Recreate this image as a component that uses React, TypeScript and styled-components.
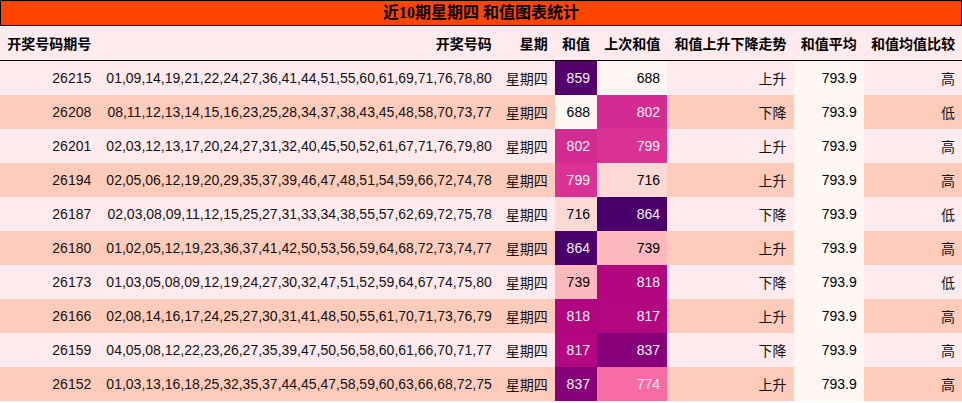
import React from "react";
import styled, { createGlobalStyle } from "styled-components";

const GlobalStyle = createGlobalStyle`
  html, body { margin: 0; padding: 0; background: #ffffff; }
  body { font-family: "Liberation Sans", "Noto Sans CJK SC", sans-serif; }
`;

const RDPU: [number, number, number][] = [
  [255, 247, 243],
  [253, 224, 221],
  [252, 197, 192],
  [250, 159, 181],
  [247, 104, 161],
  [221, 52, 151],
  [174, 1, 126],
  [122, 1, 119],
  [73, 0, 106],
];

function rdpu(t: number): [number, number, number] {
  const c = Math.max(0, Math.min(1, t));
  const pos = c * (RDPU.length - 1);
  const i = Math.min(RDPU.length - 2, Math.floor(pos));
  const f = pos - i;
  const a = RDPU[i];
  const b = RDPU[i + 1];
  return [0, 1, 2].map((k) => Math.round(a[k] + (b[k] - a[k]) * f)) as [number, number, number];
}

function lum(rgb: [number, number, number]): number {
  const lin = rgb.map((v) => {
    const c = v / 255;
    return c <= 0.03928 ? c / 12.92 : Math.pow((c + 0.055) / 1.055, 2.4);
  });
  return 0.2126 * lin[0] + 0.7152 * lin[1] + 0.0722 * lin[2];
}

function heat(v: number, min: number, max: number) {
  const t = max === min ? 0 : (v - min) / (max - min);
  const rgb = rdpu(t);
  return {
    bg: `rgb(${rgb[0]}, ${rgb[1]}, ${rgb[2]})`,
    fg: lum(rgb) < 0.408 ? "#f1f1f1" : "#000000",
  };
}

type Row = [number, string, number, number, string, string];

const rows: Row[] = [
  [26215, "01,09,14,19,21,22,24,27,36,41,44,51,55,60,61,69,71,76,78,80", 859, 688, "上升", "高"],
  [26208, "08,11,12,13,14,15,16,23,25,28,34,37,38,43,45,48,58,70,73,77", 688, 802, "下降", "低"],
  [26201, "02,03,12,13,17,20,24,27,31,32,40,45,50,52,61,67,71,76,79,80", 802, 799, "上升", "高"],
  [26194, "02,05,06,12,19,20,29,35,37,39,46,47,48,51,54,59,66,72,74,78", 799, 716, "上升", "高"],
  [26187, "02,03,08,09,11,12,15,25,27,31,33,34,38,55,57,62,69,72,75,78", 716, 864, "下降", "低"],
  [26180, "01,02,05,12,19,23,36,37,41,42,50,53,56,59,64,68,72,73,74,77", 864, 739, "上升", "高"],
  [26173, "01,03,05,08,09,12,19,24,27,30,32,47,51,52,59,64,67,74,75,80", 739, 818, "下降", "低"],
  [26166, "02,08,14,16,17,24,25,27,30,31,41,48,50,55,61,70,71,73,76,79", 818, 817, "上升", "高"],
  [26159, "04,05,08,12,22,23,26,27,35,39,47,50,56,58,60,61,66,70,71,77", 817, 837, "下降", "高"],
  [26152, "01,03,13,16,18,25,32,35,37,44,45,47,58,59,60,63,66,68,72,75", 837, 774, "上升", "高"],
];

const headers = ["开奖号码期号", "开奖号码", "星期", "和值", "上次和值", "和值上升下降走势", "和值平均", "和值均值比较"];

const Table = styled.table`
  width: 100%;
  border-collapse: collapse;
  border-spacing: 0;
  font-size: 14px;
  color: #111111;
`;

const Caption = styled.caption`
  caption-side: top;
  background: #ff4500;
  border: 1px solid #000000;
  height: 24px;
  line-height: 24px;
  font-family: "Liberation Serif", "Noto Sans CJK SC", serif;
  font-weight: bold;
  font-size: 16px;
  color: #000000;
  text-align: center;
`;

const HeadRow = styled.tr`
  background: #ffebee;
  border-bottom: 1px solid #000000;
`;

const HeadCell = styled.th`
  height: 34px;
  padding: 0 7px;
  text-align: right;
  font-weight: bold;
  white-space: nowrap;
  color: #000000;
`;

const BodyRow = styled.tr`
  background: #ffebee;
  &:nth-child(even) {
    background: #ffccbc;
  }
`;

const Cell = styled.td<{ $bg?: string; $fg?: string }>`
  height: 34px;
  padding: 0 7px;
  text-align: right;
  white-space: nowrap;
  background: ${(p) => p.$bg ?? "transparent"};
  color: ${(p) => p.$fg ?? "inherit"};
`;

export default function App() {
  const avg = heat(793.9, 793.9, 793.9);
  return (
    <>
      <GlobalStyle />
      <Table>
        <Caption>近10期星期四 和值图表统计</Caption>
        <thead>
          <HeadRow>
            {headers.map((h) => (
              <HeadCell key={h}>{h}</HeadCell>
            ))}
          </HeadRow>
        </thead>
        <tbody>
          {rows.map((r) => {
            const s = heat(r[2], 688, 864);
            const p = heat(r[3], 688, 864);
            return (
              <BodyRow key={r[0]}>
                <Cell>{r[0]}</Cell>
                <Cell>{r[1]}</Cell>
                <Cell>星期四</Cell>
                <Cell $bg={s.bg} $fg={s.fg}>{r[2]}</Cell>
                <Cell $bg={p.bg} $fg={p.fg}>{r[3]}</Cell>
                <Cell>{r[4]}</Cell>
                <Cell $bg={avg.bg} $fg={avg.fg}>793.9</Cell>
                <Cell>{r[5]}</Cell>
              </BodyRow>
            );
          })}
        </tbody>
      </Table>
    </>
  );
}
